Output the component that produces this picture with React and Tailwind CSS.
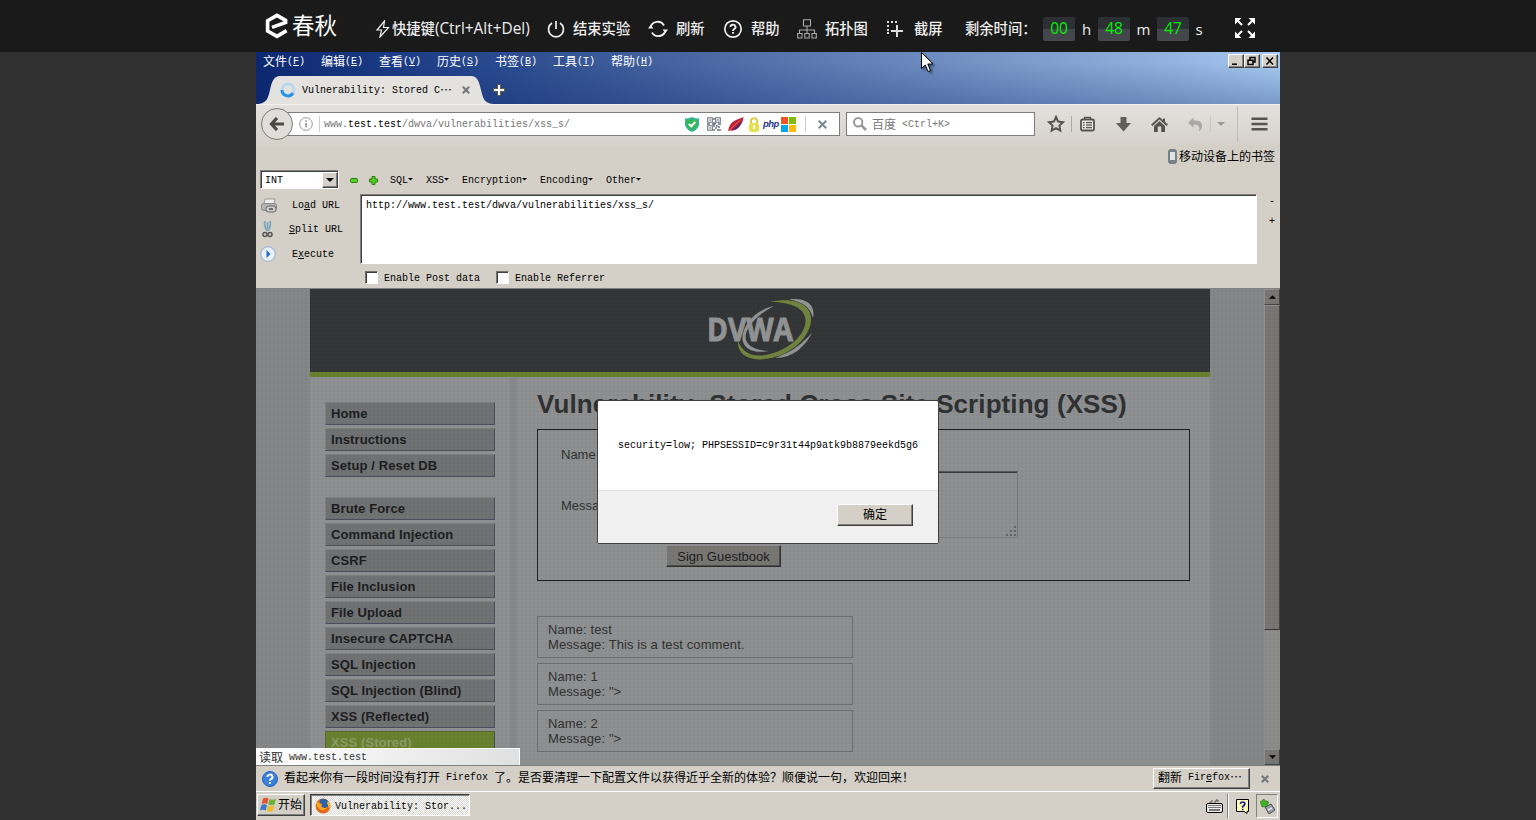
import React from "react";

const CJK = /([\u2026\u3000-\u9fff\uff00-\uffef]+|&.)/;

/* Bitmap-style UI text: 12px Chinese, 6px-wide latin. "&x" underlines x. */
function Ui({ children, className = "" }) {
  const parts = String(children).split(CJK).filter(Boolean);
  return (
    <span className={"inline-flex h-3 items-center whitespace-pre leading-3 " + className}>
      {parts.map((p, i) =>
        p[0] === "&" ? (
          <span key={i} className="pt-[2px] font-['Liberation_Mono',monospace] text-[10px] leading-3 underline underline-offset-1">{p[1]}</span>
        ) : CJK.test(p) ? (
          <span key={i} className="font-['Noto_Sans_CJK_SC',sans-serif] text-[12px]">{p}</span>
        ) : (
          <span key={i} className="pt-[2px] font-['Liberation_Mono',monospace] text-[10px] leading-3">{p}</span>
        )
      )}
    </span>
  );
}

const RAISED = "border border-t-white border-l-white border-r-[#404040] border-b-[#404040] bg-[#d4d0c8] shadow-[inset_-1px_-1px_0_#808080]";

const TopItem = ({ icon, iconClass, label, labelClass }) => (
  <div className="flex items-center">
    <div className={"flex items-center " + iconClass}>{icon}</div>
    <span className={"whitespace-nowrap " + labelClass}>{label}</span>
  </div>
);

const Digits = ({ children }) => (
  <span className="flex h-6 w-8 items-center justify-center rounded-[2px] bg-[linear-gradient(#2c3035_50%,#43474c_50%)] text-[15.5px] text-[#00f000]">
    {children}
  </span>
);

function TopBar() {
  return (
    <header className="flex h-[52px] items-center bg-[#1a1a1a] pl-[265px] pt-[6px] font-['Open_Sans','Noto_Sans_CJK_SC',sans-serif] text-[14.3px] font-medium text-[#eee]">
      <div className="-mt-[6px] flex w-[110px] items-center">
        <svg width="24" height="26" viewBox="0 0 24 26" fill="none" stroke="#fff" strokeWidth="3.6">
          <path d="M7 14.4 L20.6 9.4 V7.4 L12 2.4 L2.6 7.8 V18 L12 23.4 L21.6 17.6" />
        </svg>
        <span className="ml-[3px] whitespace-nowrap text-[22.5px] font-normal leading-6 text-white">春秋</span>
      </div>
      <TopItem iconClass="w-[17px]" labelClass="w-[138px]" label={<>快捷键<span className="text-[15.4px] leading-5">(Ctrl+Alt+Del)</span></>}
        icon={<svg width="16" height="18" viewBox="0 0 16 18" fill="none" stroke="#eee" strokeWidth="1.2"><path d="M9.5 1 L2 10 H6.5 L5 17 L13.5 7.5 H8.5 Z" /></svg>} />
      <TopItem iconClass="ml-[17px] w-[26px]" labelClass="w-[58px]" label="结束实验"
        icon={<svg width="18" height="18" viewBox="0 0 18 18" fill="none" stroke="#eee" strokeWidth="1.7"><path d="M5 3 A7.5 7.5 0 1 0 13 3 M9 1 V9" /></svg>} />
      <TopItem iconClass="ml-[17px] w-[28px]" labelClass="w-[30px]" label="刷新"
        icon={<svg width="20" height="18" viewBox="0 0 20 18" fill="none" stroke="#eee" strokeWidth="1.9"><path d="M2.5 7.5 A7.3 7.3 0 0 1 16 5.5 M17.5 10 A7.3 7.3 0 0 1 4 12.5" /><path d="M0 8.5 L2.5 5 L5.5 8.5Z M14.5 9.5 H20 L17.5 13Z" fill="#eee" stroke="none" /></svg>} />
      <TopItem iconClass="ml-[17px] w-[28px]" labelClass="w-[30px]" label="帮助"
        icon={<svg width="20" height="20" viewBox="0 0 20 20" fill="none" stroke="#eee" strokeWidth="1.7"><circle cx="10" cy="10" r="8.2" /><path d="M7.5 8.200 A2.5 2.300 0 1 1 11.200 10 Q10 10.8 10 12 M10 13 V14.800" strokeWidth="1.9" /></svg>} />
      <TopItem iconClass="ml-[16px] w-[28px]" labelClass="w-[44px]" label="拓扑图"
        icon={<svg width="20" height="20" viewBox="0 0 20 20" fill="none" stroke="#aaa" strokeWidth="1.1"><path d="M6.5 .7 H13.5 V7 H6.5Z M10 7 V14 M2.5 14 V11 H17.5 V14 M.7 14.5 H5 V19 H.7Z M7.8 14.5 H12.2 V19 H7.8Z M15 14.5 H19.3 V19 H15Z" /></svg>} />
      <TopItem iconClass="ml-[17px] w-[28px]" labelClass="w-[30px]" label="截屏"
        icon={<svg width="18" height="18" viewBox="0 0 18 18"><g fill="#ddd"><rect x="1" y="1" width="2" height="2" /><rect x="5" y="1" width="2" height="2" /><rect x="9" y="1" width="2" height="2" /><rect x="1" y="5" width="2" height="2" /><rect x="1" y="9" width="2" height="2" /><rect x="1" y="12" width="2" height="2" /><rect x="10" y="5" width="2" height="12" /><rect x="5" y="10" width="12" height="2" /></g></svg>} />
      <span className="ml-[21px] w-[78px] whitespace-nowrap">剩余时间：</span>
      <Digits>00</Digits><span className="w-[23px] text-center text-[15px]">h</span>
      <Digits>48</Digits><span className="w-[27px] text-center text-[15px]">m</span>
      <Digits>47</Digits><span className="w-[20px] text-center text-[15px]">s</span>
      <svg className="-mt-[3px] ml-[26px]" width="20" height="20" viewBox="0 0 20 20" fill="#fff" stroke="#fff" strokeWidth="2">
        <path d="M1.5 1.5 L7 7 M18.5 1.5 L13 7 M1.5 18.5 L7 13 M18.5 18.5 L13 13" />
        <path d="M0 0 H6.5 L0 6.5Z M20 0 H13.5 L20 6.5Z M0 20 H6.5 L0 13.5Z M20 20 H13.5 L20 13.5Z" stroke="none" />
      </svg>
    </header>
  );
}

const MENUS = ["文件(&F)", "编辑(&E)", "查看(&V)", "历史(&S)", "书签(&B)", "工具(&T)", "帮助(&H)"];
const WinBtn = ({ d, className = "" }) => (
  <span className={"flex h-[14px] w-4 items-center justify-center " + RAISED + " " + className}>
    <svg width="12" height="10" viewBox="0 0 12 10" fill="none" stroke="#000" strokeWidth="1.5"><path d={d} /></svg>
  </span>
);

function TitleArea() {
  return (
    <div className="flex h-[52px] flex-col justify-between bg-[linear-gradient(to_bottom,transparent_20%,rgba(10,36,106,.28)),linear-gradient(to_right,#0c2870_0%,#1d3d86_15%,#44639f_40%,#7090c3_68%,#90b0dc_88%,#a6caf0_100%)]">
      <div className="flex h-[18px] items-start">
        <div className="flex pl-[7px] pt-[3px] text-white">
          {MENUS.map((m) => <Ui key={m} className="w-[58px]">{m}</Ui>)}
        </div>
        <div className="ml-auto flex pr-[2px] pt-[2px]">
          <WinBtn d="M2 8.2 H7" />
          <WinBtn d="M4 3.5 V1.5 H9 V6 H7 M2 4.2 H7 V8.5 H2Z" />
          <WinBtn d="M2.5 1.5 L9 8.5 M9 1.5 L2.5 8.5" className="ml-[2px]" />
        </div>
      </div>
      <div className="flex h-7 items-stretch pl-[2px]">
        <svg width="22" height="28" viewBox="0 0 22 28"><path d="M0 28 C9 27 10 22 12 14 C14 5 16 0 22 0 V28Z" fill="#e3e2de" /></svg>
        <div className="flex w-[191px] items-center bg-[#e3e2de]">
          <svg width="16" height="16" viewBox="0 0 16 16" fill="none" strokeWidth="3"><circle cx="8" cy="8" r="6" stroke="#b9d9f0" /><path d="M2 8 A6 6 0 0 0 13 11.2" stroke="#2a92e6" /></svg>
          <Ui className="ml-[6px] text-black">Vulnerability: Stored C…</Ui>
          <svg className="ml-[10px]" width="8" height="8" viewBox="0 0 8 8" stroke="#73797f" strokeWidth="2.2"><path d="M.8 .8 L7.2 7.2 M7.2 .8 L.8 7.2" /></svg>
        </div>
        <svg width="22" height="28" viewBox="0 0 22 28"><path d="M22 28 C13 27 12 22 10 14 C8 5 6 0 0 0 V28Z" fill="#e3e2de" /></svg>
        <svg className="mt-[8px]" width="12" height="12" viewBox="0 0 12 12"><path d="M4 0 H8 V4 H12 V8 H8 V12 H4 V8 H0 V4 H4Z" fill="#5b5b50" /><path d="M5 1 H7 V5 H11 V7 H7 V11 H5 V7 H1 V5 H5Z" fill="#fff" /></svg>
      </div>
    </div>
  );
}

function QrIcon() {
  return (
    <svg width="14" height="14" viewBox="0 0 14 14" fill="none" stroke="#6a7480" strokeWidth="1.1">
      <path d="M.7 .7 H5.3 V5.3 H.7Z M8.7 .7 H13.3 V5.3 H8.7Z M.7 8.7 H5.3 V13.3 H.7Z" />
      <path d="M2.4 3 H3.8 M10.3 3 H11.8 M2.4 11 H3.8 M0 7 H3 M5 7 H9 M11 7 H14 M7 1 V3 M7 5 V10 M8 11 H10 M9 9 H11 M12 9 V11 M10 13 H14 M7 12 V14" strokeWidth="1.5" />
    </svg>
  );
}

const Sep = ({ className }) => <span className={"w-px bg-[#aaa8a2] " + className} />;

function NavBar() {
  return (
    <div className="flex h-[41px] items-center border-t border-[#f4f3f1] bg-[linear-gradient(#e3e1dd,#d6d2ca)] pb-[2px] pl-[5px]">
      <div className="z-10 flex size-8 items-center justify-center rounded-full border border-[#7d7b76] bg-[#e0deda]">
        <svg width="16" height="14" viewBox="0 0 16 14" fill="none" stroke="#4b4a44" strokeWidth="3.2"><path d="M8 1 L2.5 7 L8 13 M3 7 H15" /></svg>
      </div>
      <div className="-ml-[6px] flex h-6 w-[553px] items-center border border-[#7d7d7d] bg-white pl-[11px]">
        <svg width="14" height="14" viewBox="0 0 14 14" fill="none" stroke="#999"><circle cx="7" cy="7" r="6.3" /><path d="M7 6 V10.5 M7 3.3 V4.8" strokeWidth="1.6" /></svg>
        <Sep className="ml-[6px] h-4 bg-[#ccc]" />
        <span className="ml-[4px] flex text-[#777]"><Ui>www.</Ui><Ui className="text-black">test.test</Ui><Ui>/dwva/vulnerabilities/xss_s/</Ui></span>
        <svg className="ml-[115px]" width="14" height="15" viewBox="0 0 14 15"><path d="M0 1.5 Q4 1.5 7 0 Q10 1.5 14 1.5 V8 Q13 12.5 7 15 Q1 12.5 0 8Z" fill="#2fb59c" /><path d="M1.5 3 Q5 3 7 1.8 Q9 3 12.5 3 V8 Q11.5 11.5 7 13.3 Q2.5 11.5 1.5 8Z" fill="#35b755" /><path d="M3.8 7 L6.3 9.3 L10.4 5" fill="none" stroke="#fff" strokeWidth="2" /></svg>
        <span className="ml-[8px]"><QrIcon /></span>
        <svg className="ml-[7px]" width="16" height="15" viewBox="0 0 16 15"><path d="M0 14 Q1 6 8 3 L15.5 0 Q14.5 8 9 12 Q5 14.5 2 13.5Z" fill="#c42036" /><path d="M4 12 Q9 10 14 3 Q13 9 8.500 12 Q6 13.500 4 12Z" fill="#4b2f70" /><path d="M1 13.5 L13 2.5" stroke="#ee9a60" strokeWidth=".6" /></svg>
        <svg className="ml-[4px]" width="12" height="15" viewBox="0 0 12 15"><path d="M3 7 V4 Q3 1.2 6 1.2 Q9 1.2 9 4 V7" fill="none" stroke="#d5cf4a" strokeWidth="2" /><rect x=".8" y="6" width="10.4" height="9" rx="3.5" fill="#e5df50" /><path d="M6 8.5 V12" stroke="#fff" strokeWidth="2" /></svg>
        <span className="ml-[3px] w-[17px] font-['Liberation_Sans',sans-serif] text-[9.5px] font-bold italic leading-3 tracking-[-0.6px] text-[#28348c]">php</span>
        <span className="ml-[1px] grid grid-cols-2 gap-px"><i className="size-[7px] bg-[#f35325]" /><i className="size-[7px] bg-[#81bc06]" /><i className="size-[7px] bg-[#05a6f0]" /><i className="size-[7px] bg-[#ffba08]" /></span>
        <Sep className="ml-[9px] h-4 bg-[#ccc]" />
        <svg className="ml-[12px]" width="9" height="9" viewBox="0 0 9 9" stroke="#7b8791" strokeWidth="2"><path d="M.7 .7 L8.3 8.3 M8.3 .7 L.7 8.3" /></svg>
      </div>
      <div className="ml-[6px] flex h-6 w-[189px] items-center border border-[#7d7d7d] bg-white pl-[6px]">
        <svg width="14" height="14" viewBox="0 0 14 14" fill="none" stroke="#999"><circle cx="5.2" cy="5.2" r="4.2" strokeWidth="2" /><path d="M8.2 8.2 L13 13" strokeWidth="2.6" /></svg>
        <Ui className="ml-[5px] text-[#777]">{"百度 <Ctrl+K>"}</Ui>
      </div>
      <svg className="ml-[12px]" width="18" height="18" viewBox="0 0 18 18" fill="none" stroke="#56544c" strokeWidth="2"><path d="M9 2 L11.1 6.6 L16 7.2 L12.4 10.6 L13.3 15.5 L9 13.1 L4.7 15.5 L5.6 10.6 L2 7.2 L6.9 6.6Z" /></svg>
      <Sep className="ml-[6px] h-4" />
      <svg className="ml-[8px]" width="15" height="16" viewBox="0 0 15 16" fill="none" stroke="#56544c" strokeWidth="1.8"><rect x="1" y="3.5" width="13" height="11" rx="1.5" fill="#e8e6e0" /><path d="M4.5 3.2 V1.5 H10.5 V3.2 M3 6.700 H4.600 M6 6.700 H12 M3 9.200 H4.600 M6 9.200 H12 M3 11.700 H4.600 M6 11.700 H12" strokeWidth="1.3" /></svg>
      <svg className="ml-[21px]" width="15" height="15" viewBox="0 0 15 15" fill="#605e55"><path d="M4.5 0 H10.5 V6 H15 L7.5 14.5 L0 6 H4.5Z" /></svg>
      <svg className="ml-[20px]" width="17" height="15" viewBox="0 0 17 15" fill="#56544c"><path d="M8.5 2.5 L1.5 9 L0 7.5 L8.5 0 L12 3 V1.5 H14 V4.8 L17 7.5 L15.5 9Z M3 9 L8.5 4 L14 9 V15 H10.2 V9.5 H6.8 V15 H3Z" /></svg>
      <svg className="ml-[20px]" width="15" height="15" viewBox="0 0 16 15" fill="#aaa9a6"><path d="M0 5.5 L6 0 V3.3 H9 Q15 3.5 15 9 Q15 12.5 11.5 15 Q13 11 11 9 Q10 7.8 8 7.8 H6 V11Z" /></svg>
      <Sep className="ml-[7px] h-4 bg-[#cbc8c2]" />
      <svg className="ml-[6px]" width="8" height="4" viewBox="0 0 8 4" fill="#999"><path d="M0 0 H8 L4 4Z" /></svg>
      <Sep className="ml-[12px] h-9 bg-[#c0bdb6]" />
      <svg className="ml-[13px]" width="17" height="14" viewBox="0 0 17 14" stroke="#56544c" strokeWidth="2.6"><path d="M.5 1.7 H16.5 M.5 7 H16.5 M.5 12.3 H16.5" /></svg>
    </div>
  );
}

const Caret = ({ w = 4 }) => <svg width={w} height={w / 2} viewBox="0 0 8 4"><path d="M0 0 H8 L4 4Z" /></svg>;
const CheckBox = ({ label, className = "" }) => (
  <label className={"flex items-center " + className}>
    <span className="size-[13px] border border-b-white border-l-[#707070] border-r-white border-t-[#707070] bg-white shadow-[inset_1px_1px_0_#404040]" />
    <Ui className="ml-[6px]">{label}</Ui>
  </label>
);

function HackBar() {
  return (
    <div className="flex h-[121px] flex-col border-b border-[#808080] text-black">
      <div className="flex h-[26px] shrink-0 items-center pb-[3px] pl-1">
        <div className="flex h-[19px] w-[79px] items-center justify-between border border-b-white border-l-[#808080] border-r-white border-t-[#808080] bg-white pl-[4px] shadow-[inset_1px_1px_0_#404040]">
          <Ui>INT</Ui>
          <span className={"mt-px flex h-4 w-4 items-center justify-center " + RAISED}><Caret w={8} /></span>
        </div>
        <svg className="ml-[11px] mt-[2px]" width="8" height="5" viewBox="0 0 8 5"><rect x=".5" y=".5" width="7" height="4" rx="1" fill="#53d11a" stroke="#2f7d14" /></svg>
        <svg className="ml-[11px] mt-[2px]" width="9" height="9" viewBox="0 0 9 9"><path d="M3 .5 H6 V3 H8.5 V6 H6 V8.5 H3 V6 H.5 V3 H3Z" fill="#53d11a" stroke="#2f7d14" /></svg>
        <div className="ml-[12px] flex gap-[12px]">
          {["SQL", "XSS", "Encryption", "Encoding", "Other"].map((t) => (
            <span key={t} className="flex items-center"><Ui>{t}</Ui><span className="flex w-[6px] items-center"><Caret w={5} /></span></span>
          ))}
        </div>
      </div>
      <div className="flex h-[70px] shrink-0">
        <div className="flex w-[104px] flex-col">
          <div className="flex h-[22px] shrink-0 items-center pl-[5px]">
            <svg width="16" height="15" viewBox="0 0 16 15"><path d="M4 1 H14 L13 6 H3Z" fill="#eee" stroke="#999" /><rect x=".5" y="5.5" width="15" height="7" rx="2" fill="#b5b5b5" stroke="#888" /><rect x="5" y="8" width="10" height="6" rx="2.5" fill="#ccc" stroke="#666" /><path d="M8 11 H12" stroke="#555" strokeWidth="1.5" /></svg>
            <Ui className="ml-[15px]">Lo&ad URL</Ui>
          </div>
          <div className="flex h-[26px] shrink-0 items-center pl-[6px]">
            <svg width="11" height="18" viewBox="0 0 11 18" fill="none"><path d="M3 1 Q1.5 5 5 11 M8 1 Q9.500 5 6 11 M5.500 2 V9" stroke="#7ba5bb" strokeWidth="1.700" /><circle cx="3" cy="14.500" r="2" stroke="#555" strokeWidth="1.500" /><circle cx="8" cy="14.500" r="2" stroke="#555" strokeWidth="1.500" /></svg>
            <Ui className="ml-[16px]">&Split URL</Ui>
          </div>
          <div className="flex h-[24px] shrink-0 items-center pl-[4px]">
            <svg width="16" height="16" viewBox="0 0 16 16"><circle cx="8" cy="8" r="7.300" fill="#e8f1fc" stroke="#a3b8d3" strokeWidth="1.300" /><path d="M6.500 4 L10.500 8 L6.500 12Z" fill="#2e68bd" /></svg>
            <Ui className="ml-[16px]">E&xecute</Ui>
          </div>
        </div>
        <div className="flex h-[70px] w-[897px] items-start border border-b-white border-l-[#808080] border-r-white border-t-[#808080] bg-white pl-[5px] pt-[4px] shadow-[inset_1px_1px_0_#404040]">
          <Ui>http://www.test.test/dwva/vulnerabilities/xss_s/</Ui>
        </div>
        <div className="flex flex-col gap-[8px] pl-[12px] pt-[1px]"><Ui>-</Ui><Ui>+</Ui></div>
      </div>
      <div className="flex h-[24px] shrink-0 items-center pl-[109px] pt-[3px]">
        <CheckBox label="Enable Post data" />
        <CheckBox label="Enable Referrer" className="ml-[16px]" />
      </div>
    </div>
  );
}

const SIDE = [
  ["Home", "Instructions", "Setup / Reset DB"],
  ["Brute Force", "Command Injection", "CSRF", "File Inclusion", "File Upload", "Insecure CAPTCHA", "SQL Injection", "SQL Injection (Blind)", "XSS (Reflected)", "XSS (Stored)"],
];
const COMMENTS = [["test", "This is a test comment."], ["1", "\">"], ["2", "\">"]];

function Logo() {
  return (
    <svg width="112" height="64" viewBox="0 0 112 64">
      <path d="M66 4 C88 -1 109 5 107 24 C104 43 82 61 55 61.500 C41 61 33 54 34 43 C38 53 46 58.500 58 57.500 C80 55 100 40 101.500 24 C102.500 11 89 4 66 4Z" fill="#71843f" />
      <path d="M85 1.500 C101 -1 112 6 109 20 C106 9 99 4 85 1.500Z M108 35 C101 48 90 60 71 60 C90 53 97 46 108 35Z" fill="#929394" />
      <path d="M70 8 C54 16 39 31 42 42 C45 50 54 52 65 53 C50 56 40 51 38.500 42 C37 30 50 12 70 8Z" fill="#929394" />
      <text x="3" y="43" fontFamily="Open Sans, sans-serif" fontWeight="700" fontSize="33" textLength="86" lengthAdjust="spacingAndGlyphs" fill="#929394" stroke="#929394" strokeWidth="1">DVWA</text>
    </svg>
  );
}

function ScrollBar() {
  const b = "flex h-4 w-4 items-center justify-center border border-[#8f8f8f] border-b-[#444] border-r-[#444] bg-[#777673]";
  return (
    <div className="flex w-4 flex-col bg-[#8b8b8a]">
      <span className={b}><svg className="rotate-180" width="7" height="4" viewBox="0 0 8 4"><path d="M0 0 H8 L4 4Z" /></svg></span>
      <span className="h-[325px] border border-[#8f8f8f] border-b-[#333] border-r-[#444] bg-[#777673]" />
      <span className={"mt-auto " + b}><svg width="7" height="4" viewBox="0 0 8 4"><path d="M0 0 H8 L4 4Z" /></svg></span>
    </div>
  );
}

function Dialog() {
  return (
    <div className="absolute left-[341px] top-[111px] flex h-[144px] w-[342px] flex-col rounded-[2px] border border-[#404143] bg-white text-black">
      <div className="flex h-[89px] items-center pb-[2px] pl-[20px]"><Ui>security=low; PHPSESSID=c9r31t44p9atk9b8879eekd5g6</Ui></div>
      <div className="flex flex-1 items-start justify-end border-t border-[#dfdfdf] bg-[#f0f0f0] pr-[25px] pt-[13px]">
        <button className={"flex h-[22px] w-[76px] items-center justify-center pb-[2px] " + RAISED}><Ui>确定</Ui></button>
      </div>
    </div>
  );
}

function Page() {
  return (
    <div className="relative flex h-[476px] overflow-hidden bg-[#848688] font-['Liberation_Sans',sans-serif] text-[13px] text-[#303132]">
      <div className="ml-[54px] flex w-[900px] flex-col bg-[#8d8f90]">
        <div className="flex h-[88px] shrink-0 justify-center border-b-[5px] border-[#67812f] bg-[#333536] pt-[9px]"><Logo /></div>
        <div className="flex">
          <nav className="flex w-[200px] shrink-0 flex-col gap-[17px] pl-[15px] pt-[25px]">
            {SIDE.map((g, i) => (
              <div key={i} className="flex flex-col gap-[3px] pb-[3px]">
                {g.map((t) => (
                  <span key={t} className={"flex h-[23px] w-[170px] items-center border border-b-[#4b4e5c] border-r-[#4b4e5c] pl-[5px] font-bold tracking-[0.1px] " + (t === "XSS (Stored)" ? "border-l-[#57662f] border-t-[#57662f] bg-[#67812f] text-[#8d9a68]" : "border-l-[#7e8081] border-t-[#7e8081] bg-[#707172] text-[#1c1d1e]")}>{t}</span>
                ))}
              </div>
            ))}
          </nav>
          <div className="w-[7px] shrink-0 bg-[#868889]" />
          <main className="flex flex-col pl-[20px]">
            <h1 className="mt-[12px] h-[30px] whitespace-nowrap text-[26px] font-bold leading-[30px] tracking-[0.085px]">Vulnerability: Stored Cross Site Scripting (XSS)</h1>
            <section className="mt-[10px] flex h-[152px] w-[653px] flex-col border border-[#1c1d1e] pl-[23px] pt-[17px]">
              <span className="leading-4">Name *</span>
              <div className="mt-[8px] flex h-[67px] items-center">
                <span className="w-[105px] pt-[2px]">Message *</span>
                <span className="flex h-[67px] w-[352px] items-end justify-end border border-[#7a7b7a] border-t-[#555] shadow-[inset_0_1px_0_#38393a]">
                  <svg width="12" height="12" viewBox="0 0 12 12" fill="#666"><path d="M9 1 h2 v2 h-2z M5 5 h2 v2 h-2z M9 5 h2 v2 h-2z M1 9 h2 v2 h-2z M5 9 h2 v2 h-2z M9 9 h2 v2 h-2z" /></svg>
                </span>
              </div>
              <button className="ml-[105px] mt-[7px] flex h-[22px] w-[115px] shrink-0 items-center justify-center border border-b-[#303132] border-l-[#8d8f90] border-r-[#303132] border-t-[#8d8f90] bg-[#777673] pt-px text-[13px] text-[#1c1d1e] shadow-[inset_-1px_-1px_0_#4b4c4d]">Sign Guestbook</button>
            </section>
            <div className="mt-[35px] flex flex-col gap-[5px]">
              {COMMENTS.map(([n, m]) => (
                <p key={n} className="h-[42px] w-[316px] border border-[#6b6d6e] pl-[10px] pt-[5px] leading-[15px] tracking-[0.1px]">Name: {n}<br />Message: {m}</p>
              ))}
            </div>
          </main>
        </div>
      </div>
      <div className="ml-auto flex"><ScrollBar /></div>
      <div className="pointer-events-none absolute inset-0 bg-[radial-gradient(rgba(0,0,0,.035)_1px,transparent_1px)] bg-[length:4px_4px]" />
      <Dialog />
      <div className="absolute bottom-0 left-0 flex h-[17px] w-[264px] items-center border-r border-t border-[#fafafa] bg-[linear-gradient(to_right,#fff,#e0e0e0)] pl-[3px] text-[#333]"><Ui>读取 www.test.test</Ui></div>
    </div>
  );
}

function Notice() {
  return (
    <div className="flex h-[26px] items-center border-t border-[#808080] bg-[#d4d0c8] pl-[6px] text-black">
      <svg width="16" height="16" viewBox="0 0 16 16"><circle cx="8" cy="8" r="7.500" fill="#3a80dd" stroke="#2460b8" /><path d="M5.500 6 A2.500 2.300 0 1 1 9 8 Q8 8.600 8 9.800 M8 11 V12.800" fill="none" stroke="#fff" strokeWidth="1.900" /></svg>
      <Ui className="-mt-[3px] ml-[6px]">看起来你有一段时间没有打开 Firefox 了。是否要清理一下配置文件以获得近乎全新的体验？顺便说一句，欢迎回来！</Ui>
      <button className={"-mt-px ml-auto flex h-[21px] w-[97px] items-center pb-[3px] pl-[4px] " + RAISED}><Ui>翻新 Fir&efox…</Ui></button>
      <svg className="ml-[11px] mr-[11px]" width="8" height="8" viewBox="0 0 8 8" stroke="#73797f" strokeWidth="2.200"><path d="M.8 .8 L7.200 7.200 M7.200 .8 L.8 7.200" /></svg>
    </div>
  );
}

function TaskBar() {
  return (
    <div className="flex h-[29px] items-start border-t border-white bg-[#d4d0c8] pl-px pt-[2px] text-black">
      <button className={"flex h-[22px] w-12 items-center pb-[2px] pl-[2px] " + RAISED}>
        <svg className="shrink-0" width="17" height="15" viewBox="0 0 17 15"><path d="M3 1.500 Q6 0 8.500 1.500 L7.300 7 Q4.500 5.700 1.700 7Z" fill="#e0562c" /><path d="M9.500 2 Q12 3.500 16 2 L14.500 7.500 Q11.500 9 8.300 7.500Z" fill="#6cb33e" /><path d="M1.400 8 Q4.500 6.700 7 8 L5.700 13.500 Q3 12.200 0 13.500Z" fill="#3c76d0" /><path d="M8 8.500 Q11 10 14.200 8.500 L13 14 Q10 15.500 6.800 14Z" fill="#f2b928" /></svg>
        <Ui className="ml-px">开始</Ui>
      </button>
      <div className="ml-[5px] flex h-[22px] w-[160px] items-center border border-b-white border-l-[#404040] border-r-white border-t-[#404040] bg-[#ecebe7] bg-[repeating-conic-gradient(#dcd9d3_0_25%,#fff_0_50%)] bg-[length:2px_2px] pl-[4px] pt-[1px] shadow-[inset_1px_1px_0_#808080]">
        <svg width="16" height="16" viewBox="0 0 16 16"><circle cx="8" cy="8" r="7.500" fill="#e56a17" /><path d="M5 1.500 Q9 -.5 13 3 Q14.500 7 12 9 Q9 11 6 8.500 Q4 5 5 1.500Z" fill="#2b62ad" /><path d="M1 4 Q3 3.500 5 5.500 L7.500 6 L6 8 Q8 11 12 9.500 Q10 13 6 12 Q2 10 1 4Z" fill="#f6a823" /><path d="M13 3 Q16 7 14 11 Q13.500 7 12 5Z" fill="#fbcf3a" /></svg>
        <Ui className="ml-[4px]">Vulnerability: Stor...</Ui>
      </div>
      <div className="ml-auto flex h-[24px] items-center pr-[2px]">
        <svg width="17" height="14" viewBox="0 0 17 14"><path d="M4 5 V3 H6 V1 M8 3 H10 V1 H12 V3" fill="none" stroke="#555" /><rect x=".5" y="4.500" width="16" height="9" rx="1.500" fill="#eee" stroke="#000" /><path d="M2.500 6.500 H15 M2.500 8.500 H15" stroke="#000" strokeDasharray="1 1" /><path d="M3 11 H14" stroke="#000" /></svg>
        <span className="ml-[4px] h-[24px] w-[2px] border-l border-r border-l-[#808080] border-r-white" />
        <svg className="ml-[7px]" width="14" height="15" viewBox="0 0 14 15"><path d="M.5 .5 H12.500 V12.500 H11 V14.500 L8 12.500 H.5Z" fill="#ffffb0" stroke="#000" /><path d="M4.500 5 Q4.500 3 6.500 3 Q9 3 8.800 5 Q8.500 6.500 6.700 7.500 V8.700 M6.700 9.700 V11.300" fill="none" stroke="#1a1a9a" strokeWidth="1.700" /></svg>
        <span className="ml-[6px] flex h-[24px] w-[22px] items-center justify-center border border-b-white border-l-[#808080] border-r-white border-t-[#808080]">
          <svg width="15" height="15" viewBox="0 0 15 15"><path d="M5 8 L11 5 L15 11 L9 15Z" fill="#9a9ea6" stroke="#444b55" /><path d="M8 11 L12 9" stroke="#eee" strokeWidth="1.500" /><path d="M0 3 L4 0 L5 2 Q8 1 9 4 L7 5 L8 7 L2 8 L1 5Z" fill="#43b02a" stroke="#287818" strokeWidth=".6" /></svg>
        </span>
      </div>
    </div>
  );
}

export default function App() {
  return (
    <div className="relative h-[820px] w-[1536px] overflow-hidden bg-[#303030]">
      <TopBar />
      <div className="mx-auto flex h-[768px] w-[1024px] flex-col bg-[#d4d0c8]">
        <TitleArea />
        <NavBar />
        <div className="flex h-[23px] items-center justify-end pb-px pr-[5px] text-black">
          <svg width="9" height="15" viewBox="0 0 9 15"><rect x=".7" y=".7" width="7.600" height="13.600" rx="1.500" fill="#77828c" stroke="#68727b" /><rect x="2" y="3" width="5" height="8" fill="#dfe3e6" /></svg>
          <Ui className="ml-[2px]">移动设备上的书签</Ui>
        </div>
        <HackBar />
        <Page />
        <Notice />
        <TaskBar />
      </div>
      <svg className="absolute left-[921px] top-[52px] drop-shadow-[2px_2px_1px_rgba(0,0,0,.4)]" width="13" height="21" viewBox="0 0 13 21"><path d="M.5 .5 V16.500 L4.300 13 L7 19.500 L9.500 18.500 L6.800 12 H12Z" fill="#fff" stroke="#000" /></svg>
    </div>
  );
}
